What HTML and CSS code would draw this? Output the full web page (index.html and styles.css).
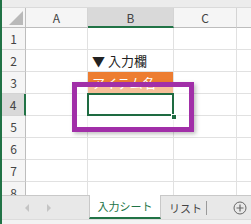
FILE: index.html
```html
<!DOCTYPE html>
<html lang="ja">

<head>
    <meta charset="UTF-8">
    <meta name="viewport" content="width=device-width, initial-scale=1.0">
    <title>入力シート</title>
    <link rel="stylesheet" href="styles.css">
</head>

<body>
    <div class="app">
        <div class="toolbar"></div>

        <div class="sheet">
            <div class="grid">
                <div class="hd corner"><span class="tri"></span></div>
                <div class="hd col">A</div>
                <div class="hd col active">B</div>
                <div class="hd col">C</div>
                <div class="hd col"></div>

                <div class="hd row">1</div>
                <div class="cell"></div><div class="cell"></div><div class="cell"></div><div class="cell"></div>

                <div class="hd row">2</div>
                <div class="cell"></div><div class="cell label">▼ 入力欄</div><div class="cell"></div><div class="cell"></div>

                <div class="hd row">3</div>
                <div class="cell"></div><div class="cell item">アイテム名</div><div class="cell"></div><div class="cell"></div>

                <div class="hd row active">4</div>
                <div class="cell"></div><div class="cell selected"></div><div class="cell"></div><div class="cell"></div>

                <div class="hd row">5</div>
                <div class="cell"></div><div class="cell"></div><div class="cell"></div><div class="cell"></div>

                <div class="hd row">6</div>
                <div class="cell"></div><div class="cell"></div><div class="cell"></div><div class="cell"></div>

                <div class="hd row">7</div>
                <div class="cell"></div><div class="cell"></div><div class="cell"></div><div class="cell"></div>

                <div class="hd row">8</div>
                <div class="cell"></div><div class="cell"></div><div class="cell"></div><div class="cell"></div>
            </div>

            <div class="highlight"></div>
            <span class="handle"></span>
        </div>

        <div class="tabs">
            <div class="nav">
                <span class="arrow left"></span>
                <span class="arrow right"></span>
            </div>
            <div class="tab current">入力シート</div>
            <div class="tab">リスト</div>
            <div class="add">
                <svg width="14" height="14" viewBox="0 0 14 14">
                    <circle cx="7" cy="7" r="6" fill="none" stroke="#666" stroke-width="1"/>
                    <path d="M7 3.5v7M3.5 7h7" stroke="#666" stroke-width="1.2"/>
                </svg>
            </div>
        </div>
        <div class="status"></div>
    </div>
</body>

</html>
```

FILE: styles.css
```css
body {
    margin: 0;
    font-family: "Noto Sans CJK JP", "Noto Sans", sans-serif;
    background-color: #fff;
}

.app {
    width: 251px;
    height: 224px;
    border-left: 2px solid #217346;
    box-sizing: border-box;
    overflow: hidden;
}

.toolbar {
    height: 7px;
    background-color: #ececec;
    border-bottom: 1px solid #dadada;
}

.sheet {
    position: relative;
    height: 187px;
    overflow: hidden;
}

.grid {
    display: grid;
    grid-template-columns: 24px 62px 86px 63px 40px;
    grid-template-rows: 20px repeat(8, 22px);
}

.grid > div {
    box-sizing: border-box;
    border-right: 1px solid #e1e1e1;
    border-bottom: 1px solid #e1e1e1;
}

.hd {
    background-color: #f5f5f5;
    color: #444;
    display: flex;
    align-items: center;
    justify-content: center;
}

.grid > .col {
    font-size: 12px;
    border-right: 1px solid #d4d4d4;
    border-bottom: 1px solid #bdbdbd;
}

.grid > .row {
    font-size: 12px;
    border-right: 1px solid #bdbdbd;
    border-bottom: 1px solid #d4d4d4;
}

.grid > .corner {
    position: relative;
    border-right: 1px solid #bdbdbd;
    border-bottom: 1px solid #bdbdbd;
}

.tri {
    position: absolute;
    right: 2px;
    bottom: 2px;
    width: 0;
    height: 0;
    border-left: 14px solid transparent;
    border-bottom: 14px solid #b9b9b9;
}

.grid > .col.active {
    background-color: #d9d9d9;
    border-bottom: 2px solid #217346;
}

.grid > .row.active {
    background-color: #d9d9d9;
    border-right: 2px solid #217346;
}

.cell {
    font-size: 13px;
    color: #222;
    display: flex;
    align-items: center;
    padding-left: 4px;
    white-space: nowrap;
}

.item {
    background-color: #ed7d31;
    color: #fff;
}

.grid > .selected {
    position: relative;
    z-index: 2;
    border: 2px solid #1e6b41;
    margin: -1px 0 0 -1px;
    width: 87px;
    height: 23px;
}

.handle {
    position: absolute;
    z-index: 3;
    left: 169px;
    top: 106px;
    width: 4px;
    height: 4px;
    background-color: #1e6b41;
    border: 1px solid #fff;
}

.highlight {
    position: absolute;
    z-index: 1;
    left: 70px;
    top: 74px;
    width: 112px;
    height: 40px;
    border: 5px solid #a12fa8;
    background-color: rgba(255, 255, 255, 0.5);
    box-shadow: 2px 2px 4px rgba(0, 0, 0, 0.25);
}

.tabs {
    display: flex;
    height: 24px;
    background-color: #e8e8e8;
    border-top: 1px solid #c8c8c8;
    box-sizing: border-box;
}

.nav {
    width: 87px;
    display: flex;
    align-items: center;
    gap: 18px;
    padding-left: 23px;
    box-sizing: border-box;
}

.arrow {
    width: 0;
    height: 0;
    border-top: 4px solid transparent;
    border-bottom: 4px solid transparent;
}

.arrow.left {
    border-right: 4px solid #c4c4c4;
}

.arrow.right {
    border-left: 4px solid #c4c4c4;
}

.tab {
    font-size: 11px;
    color: #444;
    display: flex;
    align-items: center;
    padding: 0 5px 0 8px;
    white-space: nowrap;
    position: relative;
}

.tab.current {
    width: 72px;
    padding: 0;
    box-sizing: border-box;
    justify-content: center;
    background-color: #fff;
    color: #217346;
    margin-top: -1px;
    border-left: 1px solid #c8c8c8;
    border-right: 1px solid #c8c8c8;
    border-bottom: 2px solid #217346;
}

.tab:not(.current)::after {
    content: "";
    position: absolute;
    right: 0;
    top: 5px;
    height: 14px;
    border-right: 1px solid #9a9a9a;
}

.add {
    margin-left: auto;
    padding-right: 4px;
    display: flex;
    align-items: center;
}

.status {
    height: 6px;
    background-color: #f3f3f3;
    border-top: 1px solid #dcdcdc;
}
```
